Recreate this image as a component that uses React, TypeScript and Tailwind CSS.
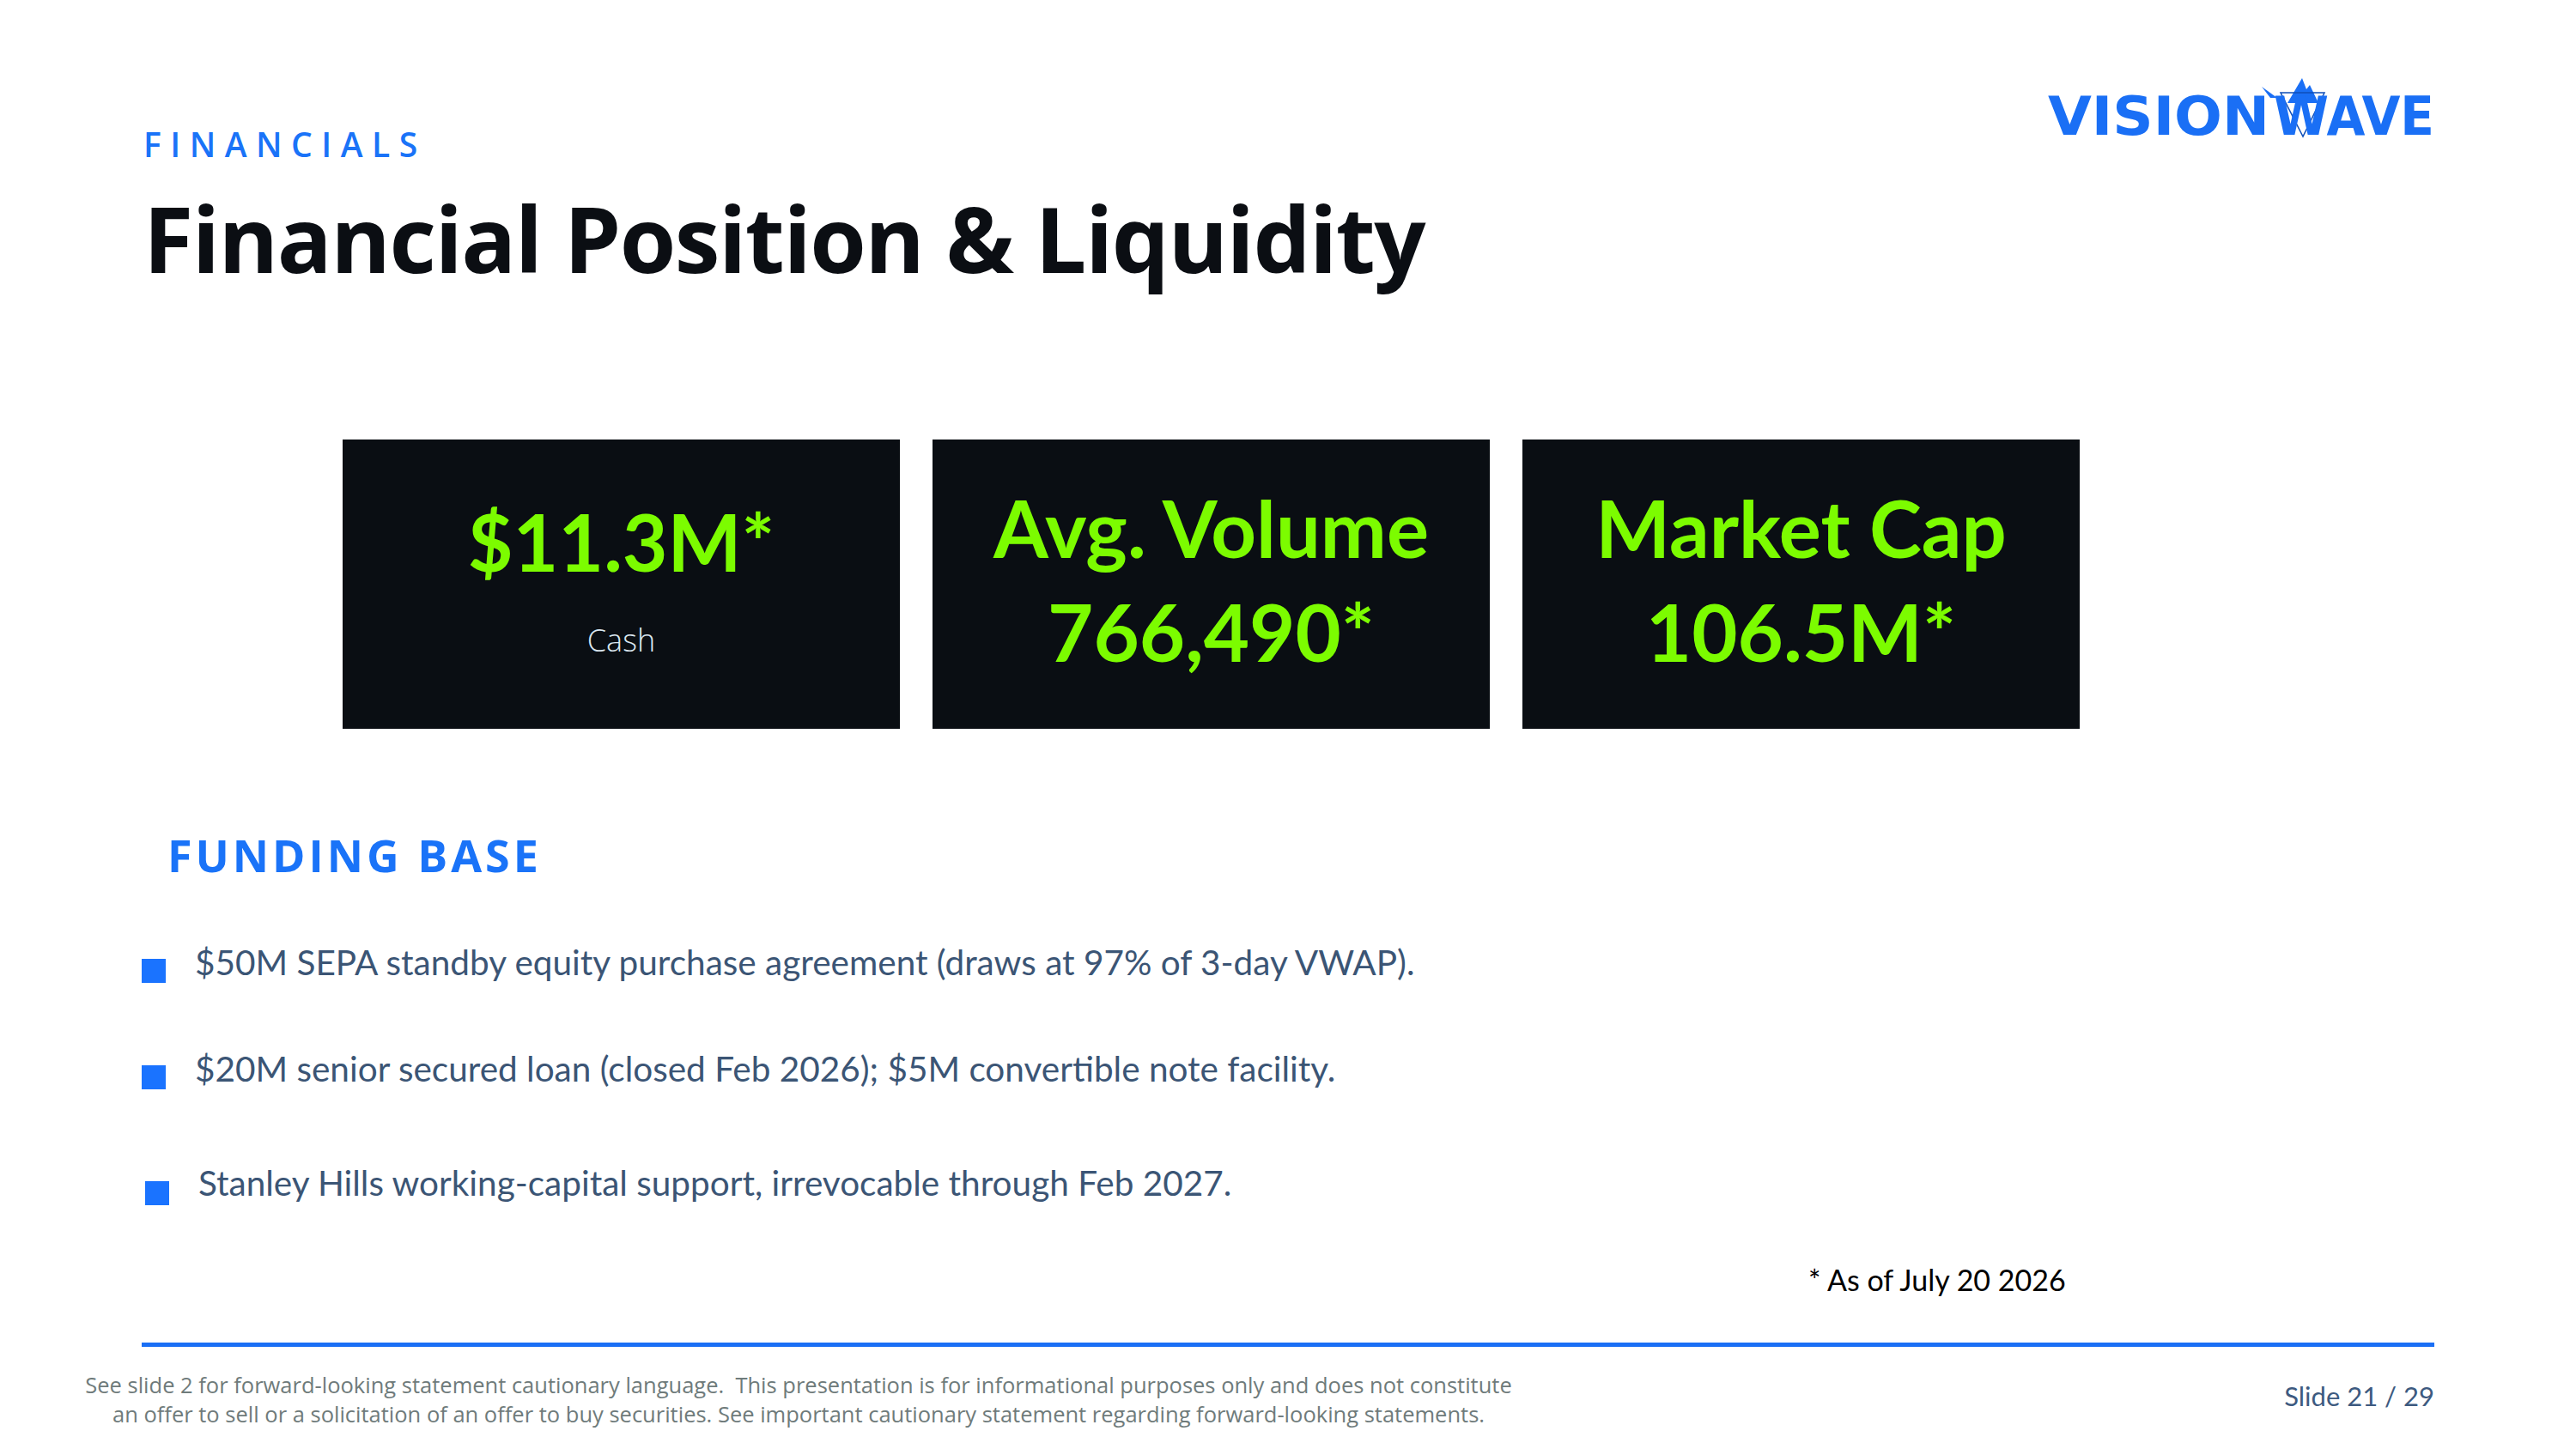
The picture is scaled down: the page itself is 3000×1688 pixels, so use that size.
import React from "react"

const stats = [
  { lines: ["Avg. Volume", "766,490*"] },
  { lines: ["Market Cap", "106.5M*"] },
]

const bullets = [
  { text: "$50M SEPA standby equity purchase agreement (draws at 97% of 3-day VWAP).", mt: "mt-[79px]", sq: "mt-[16px]", shift: false },
  { text: "$20M senior secured loan (closed Feb 2026); $5M convertible note facility.", mt: "mt-[80px]", sq: "mt-[16px]", shift: false },
  { text: "Stanley Hills working-capital support, irrevocable through Feb 2027.", mt: "mt-[89px]", sq: "mt-[18px]", shift: true },
]

function Logo() {
  return (
    <svg width="460" height="90" viewBox="0 0 460 90" aria-label="VisionWave" className="overflow-visible">
      <polygon points="254,11 272,24 264,24" fill="#1a6ff5" />
      <polygon points="284,30 301,1 306,14 310,9 320,30" fill="#1a6ff5" />
      <polygon points="276,18 327,18 302,69" fill="none" stroke="#0f4fb8" strokeWidth="1.5" />
      <text
        x="5"
        y="67"
        textLength="258"
        lengthAdjust="spacingAndGlyphs"
        fill="#1a6ff5"
        style={{ fontFamily: '"DejaVu Sans", sans-serif', fontWeight: 700, fontSize: 62 }}
      >
        VISION
      </text>
      <text
        x="268"
        y="67"
        textLength="187"
        lengthAdjust="spacingAndGlyphs"
        fill="#1a6ff5"
        style={{ fontFamily: '"DejaVu Sans", sans-serif', fontWeight: 700, fontSize: 62 }}
      >
        WAVE
      </text>
    </svg>
  )
}

export default function App() {
  return (
    <div className="relative flex h-[1688px] w-[3000px] flex-col overflow-hidden bg-white font-['Lato',sans-serif]">
      {/* header */}
      <div className="flex items-start justify-between pl-[167px] pr-[160px]">
        <div className="flex flex-col">
          <div className="mt-[148px] font-['Open_Sans',sans-serif] text-[39px] font-semibold leading-none tracking-[10.5px] text-[#1a73f8]">
            FINANCIALS
          </div>
          <h1 className="mt-[37px] font-['Open_Sans',sans-serif] text-[106px] font-bold leading-none tracking-[-1.5px] text-[#0b0e13]">
            Financial Position &amp; Liquidity
          </h1>
        </div>
        <div className="mt-[90px]">
          <Logo />
        </div>
      </div>

      {/* stat cards */}
      <div className="mt-[182px] flex gap-[38px] pl-[399px]">
        <div className="flex h-[337px] w-[649px] flex-col items-center bg-[#0a0e13] pt-[73px]">
          <div className="text-[91px] font-bold leading-none text-[#7cfc00]">$11.3M*</div>
          <div className="mt-[52px] font-['Open_Sans',sans-serif] text-[36px] font-light leading-none text-[#dbe7f1]">
            Cash
          </div>
        </div>
        {stats.map((s) => (
          <div
            key={s.lines[0]}
            className="flex h-[337px] w-[649px] flex-col items-center bg-[#0a0e13] pt-[42px] text-[92px] font-bold leading-[121px] text-[#7cfc00]"
          >
            {s.lines.map((l) => (
              <div key={l}>{l}</div>
            ))}
          </div>
        ))}
      </div>

      {/* funding base */}
      <div className="ml-[195px] mt-[121px] font-['Open_Sans',sans-serif] text-[52px] font-bold leading-none tracking-[4px] text-[#1a73f8]">
        FUNDING BASE
      </div>

      <div className="flex flex-col">
        {bullets.map((b) => (
          <div key={b.text} className={`flex items-start ${b.mt} ${b.shift ? "pl-[169px]" : "pl-[165px]"}`}>
            <span className={`h-[28px] w-[28px] shrink-0 bg-[#1a73ff] ${b.sq}`} />
            <span className="ml-[34px] text-[40.5px] leading-none text-[#3b5575]">{b.text}</span>
          </div>
        ))}
      </div>

      <div className="ml-[2106px] mt-[70px] text-[34px] leading-none text-black">* As of July 20 2026</div>

      <div className="ml-[165px] mt-[56px] h-[5px] w-[2670px] bg-[#1a6ff5]" />

      {/* footer */}
      <div className="mt-[27px] flex items-start">
        <p className="ml-[30px] w-[1800px] text-center font-['Open_Sans',sans-serif] text-[25.5px] leading-[34px] text-[#6f7b7b]">
          See slide 2 for forward-looking statement cautionary language.&nbsp; This presentation is for informational purposes only and does not constitute
          <br />
          an offer to sell or a solicitation of an offer to buy securities. See important cautionary statement regarding forward-looking statements.
        </p>
        <div className="ml-auto mr-[165px] mt-[15px] text-[31px] leading-none text-[#3d5a80]">Slide 21 / 29</div>
      </div>
    </div>
  )
}
